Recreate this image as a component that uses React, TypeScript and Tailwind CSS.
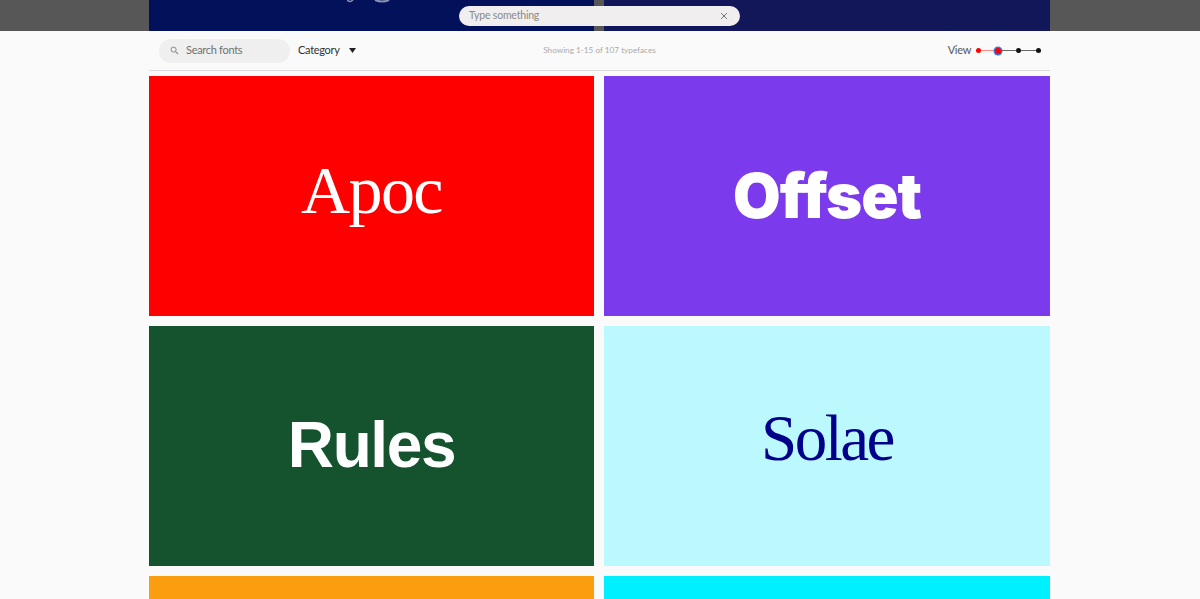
import React from "react";

const ui = "font-['Lato','Liberation_Sans',sans-serif]";

function Card({ bg, children }: { bg: string; children?: React.ReactNode }) {
  return <div className={`${bg} h-[240px] flex items-center justify-center overflow-hidden`}>{children}</div>;
}

export default function App() {
  return (
    <div className={`relative h-[599px] overflow-hidden bg-[#fafafa] ${ui}`}>
      <div className="h-[31px] bg-[#575757]">
        <div className="w-[901px] ml-[149px] grid grid-cols-[445px_446px] gap-[10px] h-full">
          <div className="bg-[#03115b] relative overflow-hidden flex justify-center">
            <svg width="60" height="3" viewBox="0 0 60 3" className="ml-[11px]">
              <path d="M0 0 Q3 3 6 0" stroke="#8a90b0" strokeWidth="1.5" fill="none" />
              <path d="M28 0 Q35 3 42 0" stroke="#8a90b0" strokeWidth="2" fill="none" />
            </svg>
          </div>
          <div className="bg-[#12175a]" />
        </div>
      </div>

      <div className="absolute top-[6px] left-[459px] w-[281px] h-[20px] rounded-full bg-[#f0eeee] flex items-center justify-between pl-[10px] pr-[12px]">
        <span className="text-[10.5px] tracking-[-0.2px] text-[#8a8a8a]">Type something</span>
        <svg width="8" height="8" viewBox="0 0 8 8">
          <path d="M1 1L7 7M7 1L1 7" stroke="#666" strokeWidth="0.9" />
        </svg>
      </div>

      <div className="w-[901px] ml-[149px]">
        <div className="relative h-[40px] flex items-center justify-between border-b border-[#dcdcdc] pl-[10px] pr-[9px]">
          <div className="flex items-center">
            <div className="w-[131px] h-[24px] rounded-full bg-[#efefef] flex items-center pl-[11px] gap-[7px]">
              <svg width="9" height="9" viewBox="0 0 10 10" fill="none">
                <circle cx="4" cy="4" r="2.8" stroke="#888" strokeWidth="1.1" />
                <path d="M6.2 6.2L9 9" stroke="#888" strokeWidth="1.3" />
              </svg>
              <span className="text-[11px] tracking-[-0.3px] text-[#6f6f6f]">Search fonts</span>
            </div>
            <span className="ml-[8px] text-[11px] tracking-[-0.3px] text-[#333]">Category</span>
            <svg width="7" height="5" viewBox="0 0 7 5" className="ml-[9px]">
              <path d="M0 0H7L3.5 5Z" fill="#222" />
            </svg>
          </div>
          <span className="absolute left-0 right-0 text-center text-[8.2px] text-[#aaaaaa] pointer-events-none">Showing 1-15 of 107 typefaces</span>
          <div className="flex items-center">
            <span className="text-[11px] tracking-[-0.3px] text-[#555] mr-[5px]">View</span>
            <div className="flex items-center">
              <span className="w-[5px] h-[5px] rounded-full bg-[#ff0000] shrink-0" />
              <span className="w-[14px] h-px bg-[#ff8a80]" />
              <span className="w-[6px] h-[6px] rounded-full bg-[#ff0000] ring-[1.5px] ring-[#3f73e0] shrink-0" />
              <span className="w-[15px] h-px bg-[#666]" />
              <span className="w-[5px] h-[5px] rounded-full bg-[#111] shrink-0" />
              <span className="w-[15px] h-px bg-[#666]" />
              <span className="w-[5px] h-[5px] rounded-full bg-[#111] shrink-0" />
            </div>
          </div>
        </div>

        <div className="grid grid-cols-[445px_446px] gap-[10px] mt-[5px]">
          <Card bg="bg-[#ff0000]">
            <span className="font-['Liberation_Serif',serif] text-[68px] leading-none text-white tracking-[-1.6px] mt-[-12px]">Apoc</span>
          </Card>
          <Card bg="bg-[#7c3aed]">
            <span className="font-['Inter',sans-serif] font-black text-[61.5px] leading-none text-white tracking-[-1px]">Offset</span>
          </Card>
          <Card bg="bg-[#14532d]">
            <span className="font-['Liberation_Sans',sans-serif] font-bold text-[64px] leading-none text-white tracking-[-1.4px] mt-[-2px]">Rules</span>
          </Card>
          <Card bg="bg-[#bbf9fe]">
            <span className="font-['Liberation_Serif',serif] text-[65px] leading-none text-[#00008b] tracking-[-2.5px] mt-[-16px]">Solae</span>
          </Card>
          <Card bg="bg-[#fa9d0e]" />
          <Card bg="bg-[#00f0ff]" />
        </div>
      </div>
    </div>
  );
}
